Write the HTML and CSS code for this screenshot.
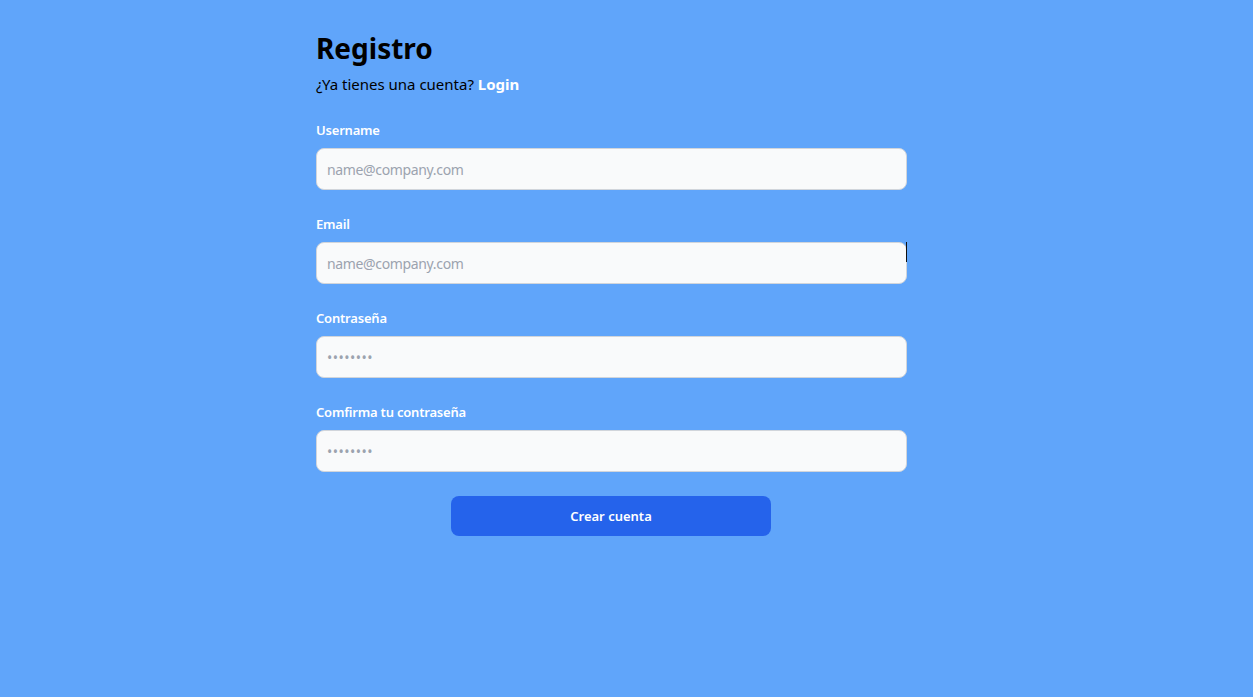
FILE: index.html
```html
<!DOCTYPE html>
<html lang="es">
<head>
<meta charset="utf-8">
<title>Registro</title>
<link rel="stylesheet" href="styles.css">
</head>
<body>
<main class="page">
  <section class="card">
    <h1 class="title">Registro</h1>
    <p class="subtitle">¿Ya tienes una cuenta? <a class="login" href="#">Login</a></p>
    <form class="form">
      <div class="field">
        <label class="label" for="username">Username</label>
        <input class="input" id="username" type="text" placeholder="name@company.com">
      </div>
      <div class="field field-email">
        <label class="label" for="email">Email</label>
        <input class="input" id="email" type="email" placeholder="name@company.com">
        <span class="caret"></span>
      </div>
      <div class="field">
        <label class="label" for="password">Contraseña</label>
        <input class="input input-pass" id="password" type="password" placeholder="••••••••">
      </div>
      <div class="field">
        <label class="label" for="confirm">Comfirma tu contraseña</label>
        <input class="input input-pass" id="confirm" type="password" placeholder="••••••••">
      </div>
      <div class="actions">
        <button class="btn" type="button">Crear cuenta</button>
      </div>
    </form>
  </section>
</main>
</body>
</html>
```

FILE: styles.css
```css
* { box-sizing: border-box; }
html, body {
  margin: 0;
  padding: 0;
  height: 100%;
}
body {
  background: #60a5fa;
  font-family: "Noto Sans", "Open Sans", sans-serif;
  color: #000;
}
.page {
  display: flex;
  justify-content: center;
  padding-top: 30px;
  padding-right: 30px;
}
.card {
  width: 591px;
}
.title {
  margin: 0;
  font-size: 28px;
  line-height: 36px;
  font-weight: 700;
}
.subtitle {
  margin: 6px 0 0;
  font-size: 15px;
  line-height: 24px;
}
.login {
  color: #fff;
  font-weight: 700;
  text-decoration: none;
}
.form {
  margin-top: 24px;
  display: flex;
  flex-direction: column;
  gap: 24px;
}
.field {
  display: flex;
  flex-direction: column;
  position: relative;
}
.label {
  display: block;
  font-size: 13px;
  line-height: 20px;
  font-weight: 600;
  letter-spacing: -0.2px;
  color: #fff;
  margin-bottom: 8px;
}
.input {
  display: block;
  width: 100%;
  height: 42px;
  padding: 10px;
  font-family: inherit;
  font-size: 14px;
  line-height: 20px;
  letter-spacing: -0.35px;
  color: #111827;
  background: #f9fafb;
  border: 1px solid #d1d5db;
  border-radius: 8px;
  outline: none;
}
.input::placeholder {
  color: #9ca3af;
  opacity: 1;
}
.input-pass {
  letter-spacing: 0.5px;
}
.caret {
  position: absolute;
  right: 0;
  top: 28px;
  width: 1px;
  height: 20px;
  background: #111;
}
.actions {
  display: flex;
  padding-left: 135px;
}
.btn {
  width: 320px;
  height: 40px;
  border: 0;
  border-radius: 8px;
  background: #2563eb;
  color: #fff;
  font-family: inherit;
  font-size: 13px;
  font-weight: 600;
}
```
